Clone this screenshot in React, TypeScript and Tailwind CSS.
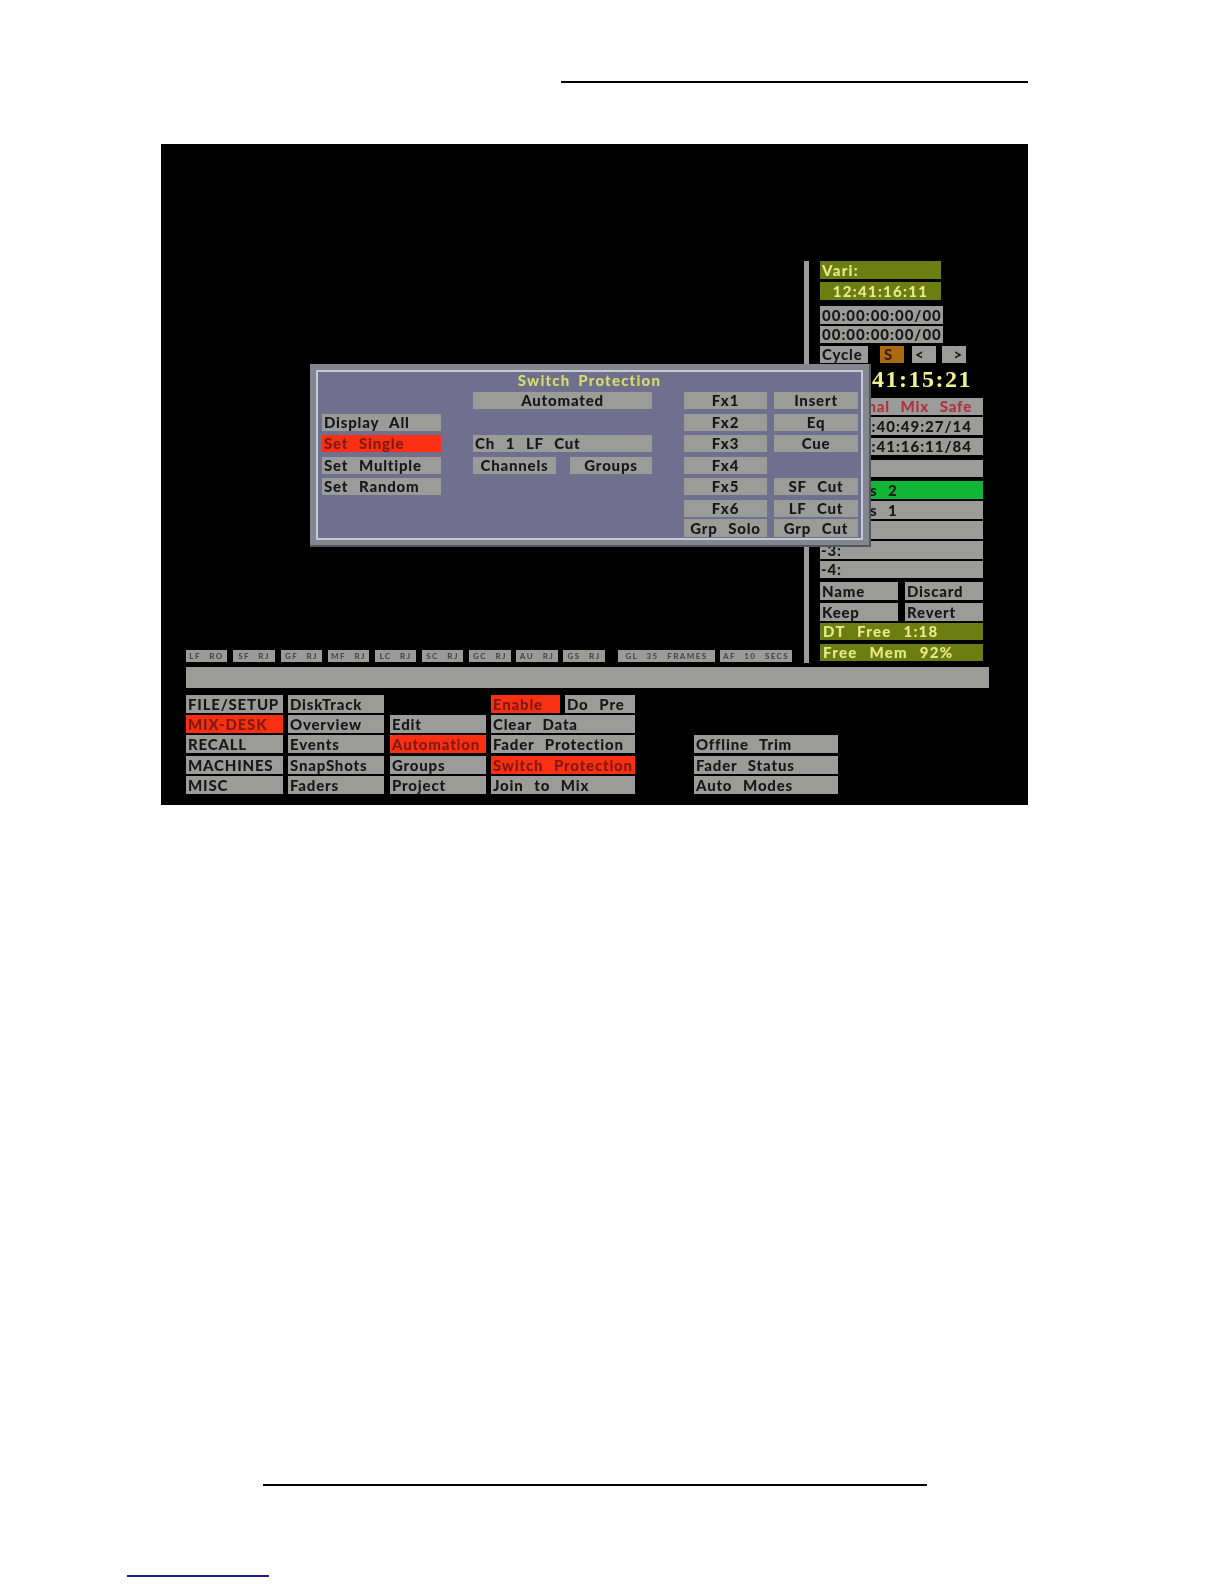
import type { ReactNode } from "react";

type Tone = "gray" | "red" | "olive" | "green" | "orange" | "ghost";

const tones: Record<Tone, string> = {
  gray: "bg-[#9b9b99] text-[#17171a]",
  red: "bg-[#fb2f12] text-[#7c1a14]",
  olive: "bg-[#6c7d12] text-[#e6ea8c] tracking-[1.3px] [word-spacing:1px]",
  green: "bg-[#12b536] text-[#101c10]",
  orange: "bg-[#ab6a10] text-[#3a1e08]",
  ghost: "",
};

const Btn = ({
  children,
  tone = "gray",
  className = "",
}: {
  children?: ReactNode;
  tone?: Tone;
  className?: string;
}) => (
  <div className={`flex items-center whitespace-pre overflow-hidden ${tones[tone]} ${className}`}>{children}</div>
);

const chips = [
  ["LF RO", "w-[41px]"],
  ["SF RJ", "w-[42px]"],
  ["GF RJ", "w-[41px]"],
  ["MF RJ", "w-[41px]"],
  ["LC RJ", "w-[41px]"],
  ["SC RJ", "w-[41px]"],
  ["GC RJ", "w-[42px]"],
  ["AU RJ", "w-[42px] -ml-[1px]"],
  ["GS RJ", "w-[42px] -ml-[1px]"],
  ["GL 35 FRAMES", "w-[97px] ml-[7px]"],
  ["AF 10 SECS", "w-[72px] -ml-[1px]"],
];

const MenuCol = ({ width, items }: { width: string; items: (ReactNode | null)[] }) => (
  <div className={`grid grid-rows-[20px_20px_21px_20px_18px] ${width}`}>
    {items.map((item, i) => (
      <div key={i}>{item}</div>
    ))}
  </div>
);

const Menu = ({ label, tone }: { label: string; tone?: Tone }) => (
  <Btn tone={tone} className="h-[18px] w-full pl-[2px]">
    {label}
  </Btn>
);

const ModalBtn = ({ label, className = "", tone }: { label?: string; className?: string; tone?: Tone }) => (
  <Btn tone={tone} className={`h-[17px] bg-[#9a9b97] ${className}`}>
    {label}
  </Btn>
);

const SwitchProtection = () => (
  <div className="absolute left-[149px] top-[220px] w-[561px] h-[183px] bg-[#85858f] pl-[6px] pt-[6px] border-r-[2px] border-b-[2px] border-[#55555f]">
    <div className="w-[547px] h-[170px] border-2 border-[#c9c9d6] bg-[#70708e]">
      <div className="h-[20px] text-center text-[#d6dd6a] leading-[14px] pt-[1px] tracking-[1.2px] [word-spacing:3px]">
        Switch  Protection
      </div>
      <div className="grid grid-cols-[119px_32px_83px_14px_82px_32px_83px_7px_84px] grid-rows-[22px_21px_22px_21px_22px_19px_18px] pl-[4px]">
        <ModalBtn label="Automated" className="col-start-3 col-span-3 row-start-1 justify-center" />
        <ModalBtn label="Display  All" className="col-start-1 row-start-2 pl-[2px]" />
        <ModalBtn label="Set  Single" tone="red" className="col-start-1 row-start-3 pl-[2px] !bg-[#fb2f12]" />
        <ModalBtn label="Set  Multiple" className="col-start-1 row-start-4 pl-[2px]" />
        <ModalBtn label="Set  Random" className="col-start-1 row-start-5 pl-[2px]" />
        <ModalBtn label="Ch  1  LF  Cut" className="col-start-3 col-span-3 row-start-3 pl-[2px]" />
        <ModalBtn label="Channels" className="col-start-3 row-start-4 justify-center" />
        <ModalBtn label="Groups" className="col-start-5 row-start-4 justify-center" />
        <ModalBtn label="Fx1" className="col-start-7 row-start-1 justify-center" />
        <ModalBtn label="Fx2" className="col-start-7 row-start-2 justify-center" />
        <ModalBtn label="Fx3" className="col-start-7 row-start-3 justify-center" />
        <ModalBtn label="Fx4" className="col-start-7 row-start-4 justify-center" />
        <ModalBtn label="Fx5" className="col-start-7 row-start-5 justify-center" />
        <ModalBtn label="Fx6" className="col-start-7 row-start-6 justify-center" />
        <ModalBtn label="Grp  Solo" className="col-start-7 row-start-7 justify-center !h-[18px]" />
        <ModalBtn label="Insert" className="col-start-9 row-start-1 justify-center" />
        <ModalBtn label="Eq" className="col-start-9 row-start-2 justify-center" />
        <ModalBtn label="Cue" className="col-start-9 row-start-3 justify-center" />
        <ModalBtn label="SF  Cut" className="col-start-9 row-start-5 justify-center" />
        <ModalBtn label="LF  Cut" className="col-start-9 row-start-6 justify-center" />
        <ModalBtn label="Grp  Cut" className="col-start-9 row-start-7 justify-center !h-[18px]" />
      </div>
    </div>
  </div>
);

const SidePanel = () => (
  <div className="w-[163px] ml-[11px] flex flex-col">
    <Btn tone="olive" className="h-[18px] w-[121px] pl-[2px]">Vari:</Btn>
    <Btn tone="olive" className="h-[18px] w-[121px] mt-[3px] justify-center">12:41:16:11</Btn>
    <Btn className="h-[18px] w-[123px] mt-[6px] pl-[2px] tracking-[1px]">00:00:00:00/00</Btn>
    <Btn className="h-[17px] w-[123px] mt-[2px] pl-[2px] tracking-[1px]">00:00:00:00/00</Btn>
    <div className="flex h-[17px] mt-[3px]">
      <Btn className="w-[48px] pl-[2px]">Cycle</Btn>
      <Btn tone="orange" className="w-[24px] ml-[12px] pl-[4px]">S</Btn>
      <Btn className="w-[24px] ml-[8px] pl-[3px]">&lt;</Btn>
      <Btn className="w-[24px] ml-[6px] justify-end pr-[3px]">&gt;</Btn>
    </div>
    <div className="h-[35px] pb-[4px] pr-[11px] flex items-center justify-end font-['Liberation_Serif',serif] font-bold text-[24px] tracking-[1.5px] text-[#f2f191]">
      12:41:15:21
    </div>
    <Btn className="h-[17px] justify-end pr-[11px] !text-[#b0323c]">Final  Mix  Safe</Btn>
    <Btn className="h-[18px] mt-[2px] justify-end pr-[11px] tracking-[1px]">12:40:49:27/14</Btn>
    <Btn className="h-[17px] mt-[3px] justify-end pr-[11px] tracking-[1px]">12:41:16:11/84</Btn>
    <Btn className="h-[17px] mt-[5px]" />
    <Btn tone="green" className="h-[18px] mt-[4px] pl-[24px]">Pass  2</Btn>
    <Btn className="h-[18px] mt-[2px] pl-[24px]">Pass  1</Btn>
    <Btn className="h-[18px] mt-[2px]" />
    <Btn className="h-[18px] mt-[2px] pl-[1px]">-3:</Btn>
    <Btn className="h-[17px] mt-[2px] pl-[1px]">-4:</Btn>
    <div className="flex justify-between h-[18px] mt-[4px]">
      <Btn className="w-[78px] pl-[2px]">Name</Btn>
      <Btn className="w-[78px] pl-[2px]">Discard</Btn>
    </div>
    <div className="flex justify-between h-[18px] mt-[3px]">
      <Btn className="w-[78px] pl-[2px]">Keep</Btn>
      <Btn className="w-[78px] pl-[2px]">Revert</Btn>
    </div>
    <Btn tone="olive" className="h-[17px] mt-[2px] pl-[3px]">DT  Free  1:18</Btn>
    <Btn tone="olive" className="h-[17px] mt-[4px] pl-[3px]">Free  Mem  92%</Btn>
  </div>
);

export default function App() {
  return (
    <div className="w-[1224px] h-[1584px] bg-white overflow-hidden pt-[81px] flex flex-col">
      <div className="ml-[561px] w-[467px] h-[2px] bg-black" />
      <div className="relative ml-[161px] mt-[61px] w-[867px] h-[661px] bg-black pt-[117px] font-['Lato',sans-serif] font-black text-[15px] tracking-[0.8px] [word-spacing:1px] leading-none blur-[0.4px]">
        <div className="flex h-[402px]">
          <div className="w-[643px] pl-[25px] pb-[1px] flex items-end">
            <div className="flex gap-[6px]">
              {chips.map(([label, w]) => (
                <div
                  key={label}
                  className={`h-[12px] ${w} bg-[#9b9b99] text-[#4a4a4c] text-[8px] tracking-[1.4px] font-black flex items-center justify-center whitespace-pre`}
                >
                  {label.replaceAll(" ", "  ")}
                </div>
              ))}
            </div>
          </div>
          <div className="w-[5px] bg-[#9a9a98]" />
          <SidePanel />
        </div>
        <div className="mt-[4px] ml-[25px] w-[803px] h-[21px] bg-[#9b9b99]" />
        <div className="mt-[7px] ml-[25px] flex">
          <MenuCol
            width="w-[97px]"
            items={[
              <Menu label="FILE/SETUP" />,
              <Menu label="MIX-DESK" tone="red" />,
              <Menu label="RECALL" />,
              <Menu label="MACHINES" />,
              <Menu label="MISC" />,
            ]}
          />
          <MenuCol
            width="w-[96px] ml-[5px]"
            items={[
              <Menu label="DiskTrack" />,
              <Menu label="Overview" />,
              <Menu label="Events" />,
              <Menu label="SnapShots" />,
              <Menu label="Faders" />,
            ]}
          />
          <MenuCol
            width="w-[96px] ml-[6px]"
            items={[
              null,
              <Menu label="Edit" />,
              <Menu label="Automation" tone="red" />,
              <Menu label="Groups" />,
              <Menu label="Project" />,
            ]}
          />
          <MenuCol
            width="w-[144px] ml-[5px]"
            items={[
              <div className="flex justify-between">
                <Btn tone="red" className="h-[18px] w-[69px] pl-[2px]">Enable</Btn>
                <Btn className="h-[18px] w-[70px] pl-[2px]">Do  Pre</Btn>
              </div>,
              <Menu label="Clear  Data" />,
              <Menu label="Fader  Protection" />,
              <Menu label="Switch  Protection" tone="red" />,
              <Menu label="Join  to  Mix" />,
            ]}
          />
          <MenuCol
            width="w-[144px] ml-[59px]"
            items={[
              null,
              null,
              <Menu label="Offline  Trim" />,
              <Menu label="Fader  Status" />,
              <Menu label="Auto  Modes" />,
            ]}
          />
        </div>
        <SwitchProtection />
      </div>
      <div className="ml-[263px] mt-[679px] w-[664px] h-[2px] bg-black" />
      <div className="ml-[127px] mt-[89px] w-[142px] h-[2px] bg-[#1a1a8c]" />
    </div>
  );
}
